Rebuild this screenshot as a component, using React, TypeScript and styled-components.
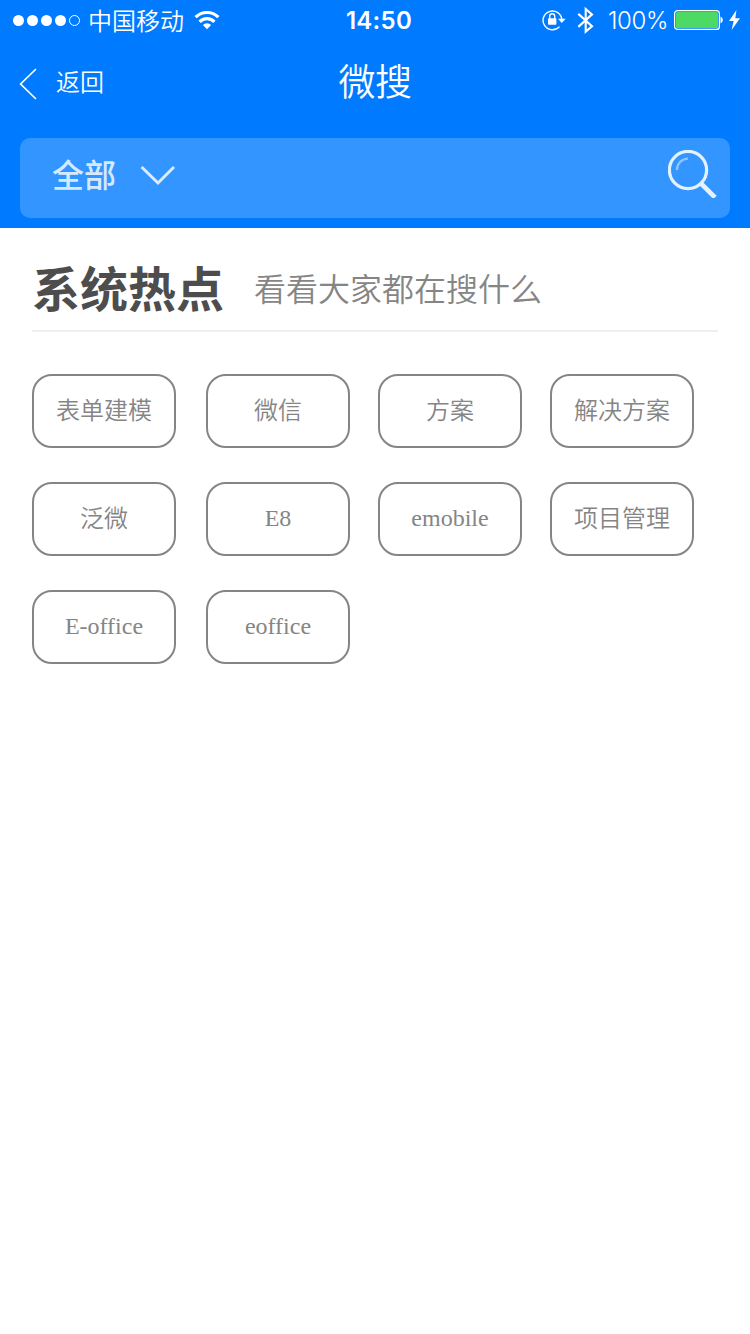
import React from 'react';
import styled, { createGlobalStyle } from 'styled-components';

const GlobalStyle = createGlobalStyle`
  *, *::before, *::after { box-sizing: border-box; }
  body {
    margin: 0;
    background: #fff;
    font-family: "Noto Sans CJK SC", sans-serif;
  }
`;

const Screen = styled.div`
  width: 750px;
  min-height: 1334px;
  background: #fff;
  overflow: hidden;
`;

const Header = styled.header`
  height: 228px;
  background: #007aff;
  color: #fff;
`;

const StatusBar = styled.div`
  display: grid;
  grid-template-columns: 1fr auto 1fr;
  grid-template-rows: 40px;
  height: 40px;
  padding: 0 9px 0 13px;
  align-items: center;
`;

const StatusGroup = styled.div<{ $end?: boolean }>`
  display: flex;
  align-items: center;
  height: 40px;
  justify-content: ${(p) => (p.$end ? 'flex-end' : 'flex-start')};
`;

const Carrier = styled.span`
  margin: 0 10px 0 7px;
  font-size: 24px;
  font-weight: 350;
  line-height: 40px;
`;

const Clock = styled.span`
  padding: 2px 0 0 4px;
  font-family: Inter, sans-serif;
  font-size: 24px;
  font-weight: 600;
  line-height: 40px;
  letter-spacing: 0.3px;
`;

const Percent = styled.span`
  margin: 0 6px 0 14px;
  padding-top: 2px;
  font-family: Inter, sans-serif;
  font-size: 24px;
  font-weight: 300;
  line-height: 40px;
  letter-spacing: -0.4px;
`;

const Icon = styled.svg<{ $gap?: number }>`
  display: block;
  flex: none;
  margin-left: ${(p) => p.$gap ?? 0}px;
`;

const NavBar = styled.nav`
  display: grid;
  grid-template-columns: 1fr auto 1fr;
  height: 88px;
  padding: 0 18px;
`;

const BackButton = styled.button`
  display: flex;
  align-items: center;
  gap: 18px;
  padding: 0;
  border: 0;
  background: none;
  color: inherit;
  font: 350 24px/84px "Noto Sans CJK SC", sans-serif;
`;

const BackLabel = styled.span`
  height: 88px;
  line-height: 82px;
`;

const Title = styled.h1`
  margin: 0;
  font-size: 37px;
  font-weight: 350;
  line-height: 80px;
  letter-spacing: -0.5px;
`;

const SearchBar = styled.div`
  display: flex;
  justify-content: space-between;
  height: 80px;
  margin: 10px 20px 0;
  padding: 0 13px 0 32px;
  border-radius: 10px;
  background: #3395ff;
`;

const Scope = styled.div`
  display: flex;
  gap: 23px;
  height: 80px;
  color: #d6eaff;
  font-size: 32px;
  font-weight: 500;
  line-height: 70px;
`;

const ScopeArrow = styled(Icon)`
  margin-top: 26px;
`;

const SearchIcon = styled(Icon)`
  margin-top: 12px;
`;

const HotSection = styled.main`
  padding: 0 32px;
`;

const SectionHead = styled.div`
  display: flex;
  height: 104px;
  border-bottom: 2px solid #efefef;
`;

const SectionTitle = styled.h2`
  margin: 0 30px 0 0;
  color: #4d4d4d;
  font-size: 48px;
  font-weight: 700;
  line-height: 116px;
`;

const SectionHint = styled.p`
  margin: 0;
  color: #858585;
  font-size: 32px;
  font-weight: 350;
  line-height: 118px;
`;

const TagGrid = styled.div`
  display: grid;
  grid-template-columns: 174px 172px 172px 144px;
  row-gap: 34px;
  margin-top: 42px;
`;

const Tag = styled.button<{ $latin?: boolean }>`
  width: 144px;
  height: 74px;
  padding: 0 0 ${(p) => (p.$latin ? 2 : 0)}px;
  border: 2px solid #858585;
  border-radius: 20px;
  background: #fff;
  color: #858585;
  font-family: "Liberation Serif", "Noto Sans CJK SC", serif;
  font-size: 24px;
  font-weight: 350;
  line-height: ${(p) => (p.$latin ? 68 : 70)}px;
  white-space: nowrap;
`;

const tags = [
  '表单建模', '微信', '方案', '解决方案',
  '泛微', 'E8', 'emobile', '项目管理',
  'E-office', 'eoffice',
];

export default function App() {
  return (
    <>
      <GlobalStyle />
      <Screen>
        <Header>
          <StatusBar>
            <StatusGroup>
              <Icon width="68" height="12" viewBox="0 0 68 12" fill="#fff">
                <circle cx="5.5" cy="6.5" r="5.5" />
                <circle cx="19.5" cy="6.5" r="5.5" />
                <circle cx="33.5" cy="6.5" r="5.5" />
                <circle cx="47.5" cy="6.5" r="5.5" />
                <circle cx="61.5" cy="6.5" r="5" fill="none" stroke="#fff" />
              </Icon>
              <Carrier>中国移动</Carrier>
              <Icon width="26" height="20" viewBox="0 0 26 20" fill="none" stroke="#fff" strokeWidth="3.2">
                <path d="M1.6 7.2a16.2 16.2 0 0 1 22.8 0" />
                <path d="M5.6 11.8a10.4 10.4 0 0 1 14.8 0" />
                <path d="M8.9 15a5.8 5.8 0 0 1 8.2 0L13 19.2Z" fill="#fff" stroke="none" />
              </Icon>
            </StatusGroup>
            <Clock>14:50</Clock>
            <StatusGroup $end>
              <Icon width="24" height="22" viewBox="0 0 24 22" fill="none" stroke="#fff" strokeWidth="1.4">
                <path d="M17.5 17.6A9.4 9.4 0 1 1 19.8 10.4" />
                <path d="M16 9.8h7.6l-3.8 4.3Z" fill="#fff" stroke="none" />
                <rect x="6" y="9.2" width="8.4" height="6.6" rx="0.8" fill="#fff" stroke="none" />
                <path d="M7.7 9.8V7.3a2.5 2.5 0 0 1 5 0v2.5" />
              </Icon>
              <Icon $gap={11} width="17" height="28" viewBox="0 0 17 28" fill="none" stroke="#fff" strokeWidth="2.1">
                <path d="M1.3 7.9 15 20.2 8.7 25.6V3L15 8.4 1.3 20.9" />
              </Icon>
              <Percent>100%</Percent>
              <Icon width="49" height="20" viewBox="0 0 49 20">
                <rect x="0.6" y="0.6" width="44.8" height="18.8" rx="3" fill="none" stroke="#fff" strokeWidth="1.2" />
                <rect x="2" y="2" width="42" height="16" rx="1.5" fill="#4cd964" />
                <path d="M46.5 6.5q2.3.8 2.3 3.5t-2.3 3.5Z" fill="#fff" />
              </Icon>
              <Icon $gap={5} width="13" height="20" viewBox="0 0 13 20">
                <path d="M8.5 0 1 11h4.6L3.6 20 12 8.2H7.3Z" fill="#fff" />
              </Icon>
            </StatusGroup>
          </StatusBar>
          <NavBar>
            <BackButton>
              <Icon width="20" height="32" viewBox="0 0 20 32" fill="none" stroke="#fff" strokeWidth="1.7">
                <path d="M18 1 2.6 16 18 31" />
              </Icon>
              <BackLabel>返回</BackLabel>
            </BackButton>
            <Title>微搜</Title>
          </NavBar>
          <SearchBar>
            <Scope>
              全部
              <ScopeArrow width="36" height="24" viewBox="0 0 36 24" fill="none" stroke="#dcecff" strokeWidth="3">
                <path d="M2.6 3 19 19 35 3" />
              </ScopeArrow>
            </Scope>
            <SearchIcon width="49" height="48" viewBox="0 0 49 48" fill="none" stroke="#e4f1ff">
              <circle cx="20" cy="20" r="18.6" strokeWidth="3.2" />
              <path d="M9 20A11 11 0 0 1 20 8.6" stroke="#8fc4ff" strokeWidth="2.4" />
              <path d="M32.5 33 47 47.5" strokeWidth="4.6" />
            </SearchIcon>
          </SearchBar>
        </Header>
        <HotSection>
          <SectionHead>
            <SectionTitle>系统热点</SectionTitle>
            <SectionHint>看看大家都在搜什么</SectionHint>
          </SectionHead>
          <TagGrid>
            {tags.map((tag) => (
              <Tag key={tag} $latin={/^[\x20-\x7e]+$/.test(tag)}>{tag}</Tag>
            ))}
          </TagGrid>
        </HotSection>
      </Screen>
    </>
  );
}
